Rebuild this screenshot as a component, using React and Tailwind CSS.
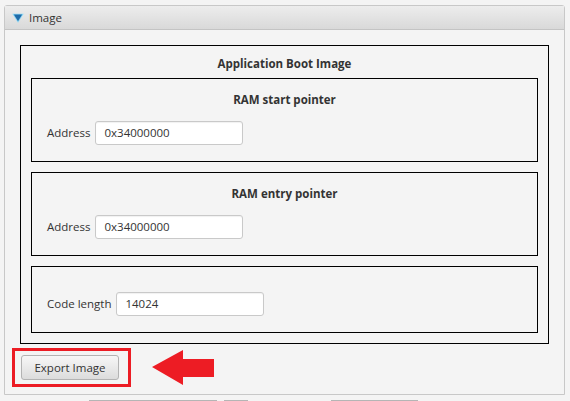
import React from "react";

const font = { fontFamily: '"Open Sans", "Noto Sans", sans-serif' };

function Field({ label, value }) {
    return (
        <div className="flex items-center gap-[5px] pl-[15px]">
            <span className="text-[11.5px] text-[#333]">{label}</span>
            <div className="w-[148px] h-[24px] bg-white border border-[#c9c9c9] rounded-[3px] shadow-[inset_0_1px_1px_rgba(0,0,0,0.06)] flex items-center pl-[8px] text-[11.5px] text-[#333]">
                {value}
            </div>
        </div>
    );
}

function PointerBox({ title, value }) {
    return (
        <div className="h-[84px] border border-black flex flex-col">
            <div className="h-[42px] pt-[12px] text-center text-[11.5px] font-bold text-[#333] leading-[18px]">
                {title}
            </div>
            <Field label="Address" value={value} />
        </div>
    );
}

export default function App() {
    return (
        <div className="w-[570px] h-[401px] bg-[#f4f4f4] overflow-hidden pt-[5px]" style={font}>
            {/* Titled pane */}
            <div className="ml-[4px] w-[561px] h-[390px] border border-[#c8c8c8] rounded-t-[3px] flex flex-col">
                <div className="h-[24px] bg-gradient-to-b from-[#ededed] to-[#d9d9d9] border-b border-[#c4c4c4] flex items-center pl-[7px] gap-[5px]">
                    <svg width="12" height="10" viewBox="0 0 12 10">
                        <polygon points="0.3,0.8 11.7,0.8 6,9.7" fill="#8ad6f5" />
                        <polygon points="1.8,1.6 10.2,1.6 6,8.2" fill="#1f6aa8" />
                    </svg>
                    <span className="text-[11.5px] text-[#333]">Image</span>
                </div>

                <div className="flex-1 px-[15px] pt-[15px]">
                    <div className="h-[299px] border border-black px-[10px]">
                        <div className="h-[32px] pt-[9px] text-center text-[11.5px] font-bold text-[#333] leading-[18px]">
                            Application Boot Image
                        </div>
                        <div className="flex flex-col gap-[10px]">
                            <PointerBox title="RAM start pointer" value="0x34000000" />
                            <PointerBox title="RAM entry pointer" value="0x34000000" />
                            <div className="h-[67px] border border-black pt-[25px]">
                                <Field label="Code length" value="14024" />
                            </div>
                        </div>
                    </div>

                    <div className="flex items-center mt-[4px] -ml-[8px]">
                        <div className="border-[3px] border-[#ec1c24] pl-[6px] pr-[9px] py-[4px]">
                            <div className="w-[98px] h-[25px] rounded-[3px] border border-[#b3b3b3] bg-gradient-to-b from-[#f7f7f7] to-[#dcdcdc] flex items-center justify-center text-[11.5px] text-[#333]">
                                Export Image
                            </div>
                        </div>
                        <svg width="62" height="36" viewBox="0 0 62 36" className="ml-[21px]">
                            <polygon points="0,17 31,0 31,9 62,9 62,27 31,27 31,35" fill="#ed1c24" />
                        </svg>
                    </div>
                </div>
            </div>

            {/* Buttons peeking below */}
            <div className="flex mt-[5px]">
                <div className="ml-[89px] w-[128px] h-[20px] border-t border-x border-[#b5b5b5] bg-[#e8e8e8]" />
                <div className="ml-[7px] w-[24px] h-[20px] border-t border-x border-[#b5b5b5] bg-[#e8e8e8]" />
                <div className="ml-[83px] w-[87px] h-[20px] border-t border-x border-[#b5b5b5] bg-[#e8e8e8]" />
            </div>
        </div>
    );
}
